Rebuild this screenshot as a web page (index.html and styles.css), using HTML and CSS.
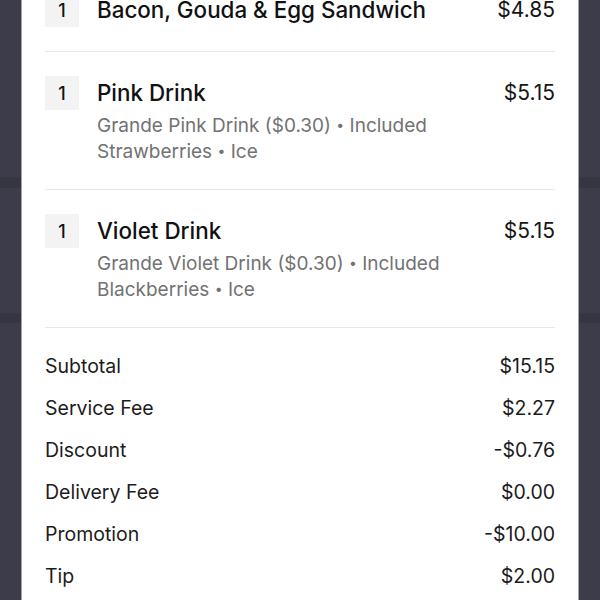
FILE: index.html
```html
<!DOCTYPE html>
<html>
<head>
<meta charset="utf-8">
<link rel="stylesheet" href="styles.css">
</head>
<body>
<div class="backdrop">
  <div class="card">
    <div class="item">
      <div class="qty">1</div>
      <div class="info">
        <div class="name">Bacon, Gouda &amp; Egg Sandwich</div>
      </div>
      <div class="price">$4.85</div>
    </div>
    <div class="item">
      <div class="qty">1</div>
      <div class="info">
        <div class="name">Pink Drink</div>
        <div class="desc">Grande Pink Drink ($0.30) <span class="dot">•</span> Included<br>Strawberries <span class="dot">•</span> Ice</div>
      </div>
      <div class="price">$5.15</div>
    </div>
    <div class="item">
      <div class="qty">1</div>
      <div class="info">
        <div class="name">Violet Drink</div>
        <div class="desc">Grande Violet Drink ($0.30) <span class="dot">•</span> Included<br>Blackberries <span class="dot">•</span> Ice</div>
      </div>
      <div class="price">$5.15</div>
    </div>
    <div class="summary">
      <div class="row"><span>Subtotal</span><span>$15.15</span></div>
      <div class="row"><span>Service Fee</span><span>$2.27</span></div>
      <div class="row"><span>Discount</span><span>-$0.76</span></div>
      <div class="row"><span>Delivery Fee</span><span>$0.00</span></div>
      <div class="row"><span>Promotion</span><span>-$10.00</span></div>
      <div class="row"><span>Tip</span><span>$2.00</span></div>
    </div>
  </div>
</div>
</body>
</html>
```
FILE: styles.css
```css
html, body {
  margin: 0;
  padding: 0;
  height: 600px;
  overflow: hidden;
}
body {
  background: linear-gradient(to bottom,
    #3d3c4b 0, #3d3c4b 177px,
    #363542 177px, #363542 188px,
    #3d3c4b 188px, #3d3c4b 313px,
    #363542 313px, #363542 323px,
    #3d3c4b 323px);
  font-family: Inter, "Noto Sans", sans-serif;
  color: #141414;
}
.backdrop {
  display: flex;
  justify-content: center;
}
.card {
  box-sizing: border-box;
  width: 558px;
  margin-top: -31px;
  background: #fff;
  border-left: 1px solid #a3a3ab;
  border-right: 1px solid #a3a3ab;
  padding: 0 23px;
  height: 640px;
}
.item {
  display: flex;
  align-items: flex-start;
  padding: 24px 0;
  border-bottom: 1px solid #e8e8e8;
}
.qty {
  width: 34px;
  height: 34px;
  flex: none;
  background: #f3f3f3;
  display: flex;
  align-items: center;
  justify-content: center;
  font-size: 18px;
  font-weight: 500;
  color: #141414;
}
.info {
  flex: 1;
  margin-left: 18px;
}
.name {
  font-size: 22.4px;
  line-height: 34px;
  font-weight: 500;
  color: #111;
}
.desc {
  margin-top: 3px;
  font-size: 19px;
  line-height: 26px;
  color: #727272;
}
.dot {
  font-size: 14px;
  line-height: 0;
  vertical-align: 2px;
}
.price {
  font-size: 21px;
  line-height: 34px;
  color: #161616;
}
.summary {
  padding-top: 17px;
}
.row {
  display: flex;
  justify-content: space-between;
  font-size: 19.5px;
  line-height: 42px;
  color: #1c1c1c;
}
```
